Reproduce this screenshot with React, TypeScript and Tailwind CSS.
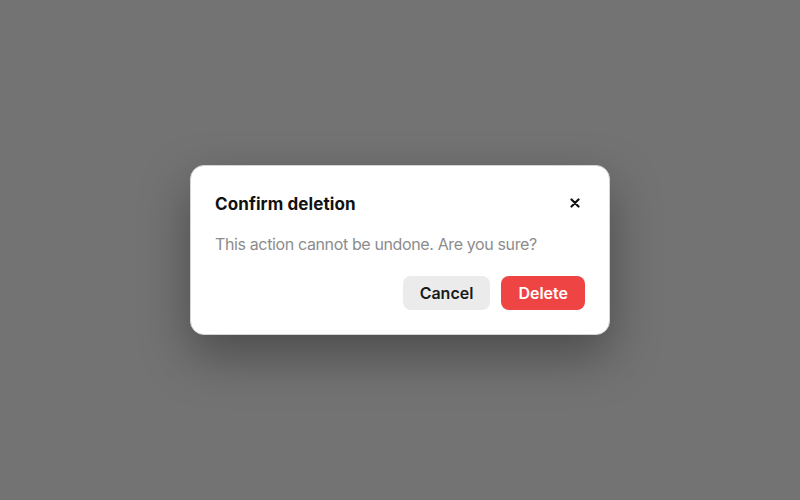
import React from "react";

export default function App() {
  return (
    <div
      className="w-[800px] h-[500px] bg-[#737373] flex items-center justify-center"
      style={{ fontFamily: "Inter, 'Noto Sans', sans-serif" }}
    >
      <div className="w-[420px] bg-white rounded-[14px] border border-[#d4d4d4] p-6 shadow-[0_20px_50px_rgba(0,0,0,0.35)]">
        <div className="flex items-center justify-between h-7">
          <h2 className="text-[17px] font-bold text-[#111] leading-7 tracking-[0.1px]">Confirm deletion</h2>
          <button className="w-6 h-6 flex items-center justify-center -mr-[2px] -mt-[3px]">
            <svg width="10" height="10" viewBox="0 0 10 10">
              <path d="M1.5 1.5 L8.5 8.5 M8.5 1.5 L1.5 8.5" stroke="#111" strokeWidth="2.2" strokeLinecap="round" />
            </svg>
          </button>
        </div>
        <p className="mt-[14px] text-[16px] leading-6 text-[#8c8c8c] tracking-[-0.37px]">
          This action cannot be undone. Are you sure?
        </p>
        <div className="mt-5 flex justify-end gap-[11px]">
          <button className="h-[34px] px-[17px] rounded-lg bg-[#ebebeb] text-[16px] font-semibold text-[#1a1a1a]">
            Cancel
          </button>
          <button className="h-[34px] px-[17px] rounded-lg bg-[#ef4444] text-[16px] font-semibold text-white">
            Delete
          </button>
        </div>
      </div>
    </div>
  );
}
